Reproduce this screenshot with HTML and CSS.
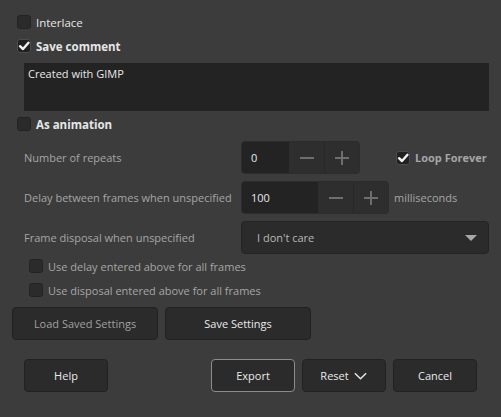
FILE: index.html
```html
<!DOCTYPE html>
<html>
<head>
<meta charset="utf-8">
<link rel="stylesheet" href="styles.css">
</head>
<body>
<div class="dialog">
  <label class="check-row first">
    <span class="box"></span><span class="lbl">Interlace</span>
  </label>
  <label class="check-row">
    <span class="box checked"><svg viewBox="0 0 14 14" width="14" height="14"><polyline points="3,7.2 6,10 11.5,3.8" /></svg></span><span class="lbl bold">Save comment</span>
  </label>
  <div class="comment">Created with GIMP</div>
  <label class="check-row anim">
    <span class="box"></span><span class="lbl bold">As animation</span>
  </label>

  <div class="anim-grid">
    <div class="glabel">Number of repeats</div>
    <div class="gcell">
      <div class="spin">
        <div class="spin-input w47">0</div>
        <div class="spin-btn"><span class="minus"></span></div>
        <div class="spin-btn"><span class="plus"></span></div>
      </div>
      <label class="loop">
        <span class="box checked"><svg viewBox="0 0 14 14" width="14" height="14"><polyline points="3,7.2 6,10 11.5,3.8" /></svg></span><span class="lbl bold dim small">Loop Forever</span>
      </label>
    </div>
    <div class="glabel">Delay between frames when unspecified</div>
    <div class="gcell">
      <div class="spin">
        <div class="spin-input w77">100</div>
        <div class="spin-btn"><span class="minus"></span></div>
        <div class="spin-btn"><span class="plus"></span></div>
      </div>
      <span class="unit">milliseconds</span>
    </div>
    <div class="glabel">Frame disposal when unspecified</div>
    <div class="gcell">
      <div class="combo"><span>I don't care</span><span class="tri"></span></div>
    </div>
  </div>

  <label class="check-row sub">
    <span class="box"></span><span class="lbl dim">Use delay entered above for all frames</span>
  </label>
  <label class="check-row sub">
    <span class="box"></span><span class="lbl dim">Use disposal entered above for all frames</span>
  </label>

  <div class="settings-row">
    <button class="btn wide dimtext">Load Saved Settings</button>
    <button class="btn wide">Save Settings</button>
  </div>

  <div class="action-row">
    <button class="btn act">Help</button>
    <div class="spacer"></div>
    <button class="btn act default">Export</button>
    <button class="btn act">Reset <svg class="chev" viewBox="0 0 16 10" width="15" height="10"><polyline points="2,2 8,8 14,2"/></svg></button>
    <button class="btn act">Cancel</button>
  </div>
</div>
</body>
</html>
```
FILE: styles.css
```css
* { box-sizing: border-box; }
html, body {
  margin: 0;
  padding: 0;
  background: #3c3c3c;
  width: 501px;
  height: 417px;
  overflow: hidden;
}
body {
  font-family: "Open Sans", "Noto Sans", sans-serif;
  font-size: 11px;
  color: #e6e6e6;
  white-space: nowrap;
}
.dialog {
  display: flex;
  flex-direction: column;
  padding: 0 12px 0 12px;
}
.check-row {
  display: flex;
  align-items: center;
  height: 24px;
  padding-left: 5px;
}
.check-row.first { margin-top: 10px; }
.box {
  width: 14px;
  height: 14px;
  border-radius: 3px;
  background: #2b2b2b;
  border: 1px solid #232323;
  display: flex;
  align-items: center;
  justify-content: center;
  flex: none;
}
.box.checked { background: #202020; border-color: #4c4c4c; }
.box svg { display: block; margin: -1px; }
.box polyline {
  fill: none;
  stroke: #f2f2f2;
  stroke-width: 2.4;
  stroke-linecap: round;
  stroke-linejoin: round;
}
.lbl { margin-left: 5px; font-size: 11.5px; }
.lbl.small { font-size: 11px; }
.bold { font-weight: 700; }
.dim { color: #a6a6a6; }
.check-row.sub .lbl { font-size: 11px; }
.comment {
  margin: 5px 0 0 12px;
  width: 465px;
  height: 48px;
  background: #232323;
  padding: 3px 4px;
  color: #e8e8e8;
}
.check-row.anim { margin-top: 1px; }
.anim-grid {
  display: grid;
  grid-template-columns: 217px 1fr;
  row-gap: 7px;
  margin-top: 5px;
  padding-left: 12px;
}
.glabel {
  display: flex;
  align-items: center;
  color: #a6a6a6;
  height: 33px;
}
.gcell {
  display: flex;
  align-items: center;
  height: 33px;
}
.spin {
  display: flex;
  height: 33px;
  border: 1px solid #2c2c2c;
  border-radius: 4px;
  overflow: hidden;
  background: #2e2e2e;
}
.spin-input {
  background: #232323;
  color: #e8e8e8;
  display: flex;
  align-items: center;
  padding-left: 9px;
}
.w47 { width: 47px; }
.w77 { width: 76px; }
.spin-btn {
  width: 35px;
  position: relative;
  border-left: 1px solid #282828;
}
.spin-input + .spin-btn { border-left: none; }
.minus, .plus {
  position: absolute;
  left: 50%;
  top: 50%;
  width: 14px;
  height: 14px;
  margin: -7px 0 0 -7px;
}
.minus::before, .plus::before, .plus::after {
  content: "";
  position: absolute;
  background: #6e6e6e;
}
.minus::before, .plus::before {
  left: 0; right: 0; top: 6px; height: 2px;
}
.plus::after {
  top: 0; bottom: 0; left: 6px; width: 2px;
}
.loop {
  display: flex;
  align-items: center;
  margin-left: 36px;
}
.unit {
  margin-left: 5px;
  color: #a6a6a6;
}
.combo {
  width: 248px;
  height: 33px;
  background: #2b2b2b;
  border: 1px solid #242424;
  border-radius: 4px;
  display: flex;
  align-items: center;
  justify-content: space-between;
  padding: 0 11px 0 15px;
  color: #b8b8b8;
}
.tri {
  width: 0;
  height: 0;
  border-left: 6px solid transparent;
  border-right: 6px solid transparent;
  border-top: 6px solid #a8a8a8;
}
.check-row.sub {
  padding-left: 17px;
  height: 24px;
}
.settings-row {
  display: flex;
  gap: 7px;
  margin-top: 5px;
}
.btn {
  font-family: inherit;
  font-size: 11px;
  color: #eaeaea;
  background: #2b2b2b;
  border: 1px solid #222;
  border-radius: 4px;
  height: 33px;
  padding: 0;
  display: flex;
  align-items: center;
  justify-content: center;
}
.btn.wide { width: 146px; }
.dimtext { color: #a0a0a0; }
.action-row {
  display: flex;
  gap: 7px;
  margin-top: 19px;
  padding: 0 12px;
}
.btn.act { width: 84px; }
.btn.default { border-color: #8c8c8c; }
.spacer { flex: 1; }
.chev { margin-left: 4px; }
.chev polyline {
  fill: none;
  stroke: #e6e6e6;
  stroke-width: 1.6;
}
```
